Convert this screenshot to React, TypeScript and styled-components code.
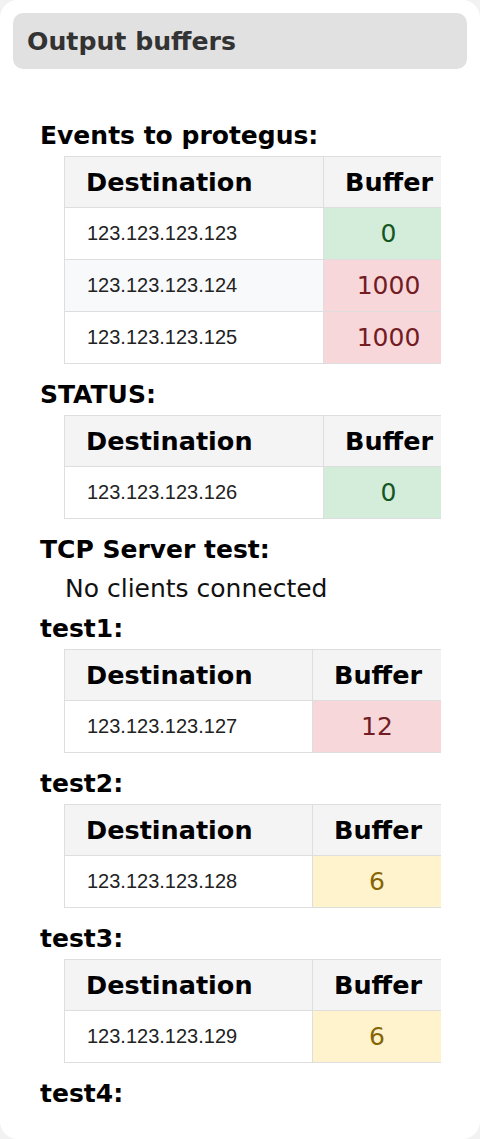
import React from "react";
import styled, { createGlobalStyle } from "styled-components";

const GlobalStyle = createGlobalStyle`
  html, body { margin: 0; padding: 0; background: #f2f2f2; }
  body { font-family: "DejaVu Sans", Verdana, sans-serif; }
`;

const Card = styled.div`
  width: 480px;
  height: 1139px;
  background: #fff;
  border-radius: 18px;
  overflow: hidden;
  box-sizing: border-box;
  padding-top: 13px;
`;

const TitleBar = styled.header`
  margin: 0 13px;
  height: 56px;
  background: #e1e1e1;
  border-radius: 10px;
  display: flex;
  align-items: center;
  padding: 0 14px;
  box-sizing: border-box;
`;

const Title = styled.h2`
  margin: 0;
  font-size: 25.2px;
  font-weight: bold;
  color: #333;
`;

const Content = styled.div`
  padding: 52px 39px 0 40px;
`;

const Heading = styled.h3`
  margin: 0;
  font-size: 25px;
  line-height: 30px;
  font-weight: bold;
  color: #000;
`;

const Note = styled.p`
  margin: 2px 0 3px 25px;
  font-size: 25px;
  line-height: 44px;
  color: #111;
`;

const TableWrap = styled.div`
  margin: 5px 0 16px 24px;
  overflow: hidden;
`;

const Table = styled.table`
  border-collapse: collapse;
  table-layout: fixed;
`;

const Th = styled.th`
  height: 51px;
  padding: 0 21px;
  box-sizing: border-box;
  text-align: left;
  background: #f4f4f4;
  border: 1px solid #dedede;
  font-size: 25.5px;
  font-weight: bold;
  color: #000;
  white-space: nowrap;
`;

const Td = styled.td`
  height: 52px;
  padding: 0 22px;
  box-sizing: border-box;
  border: 1px solid #dedede;
  font-family: "Liberation Sans", Arial, sans-serif;
  font-size: 20px;
  color: #222;
  white-space: nowrap;
`;

type Level = "ok" | "warn" | "bad";

const palette: Record<Level, { bg: string; fg: string }> = {
  ok: { bg: "#d4edda", fg: "#155724" },
  warn: { bg: "#fff3cd", fg: "#856404" },
  bad: { bg: "#f8d7da", fg: "#721c24" },
};

const ValueTd = styled.td<{ $level: Level }>`
  height: 52px;
  padding: 0 10px;
  box-sizing: border-box;
  border: 1px solid #dedede;
  text-align: center;
  font-size: 25px;
  background: ${(p) => palette[p.$level].bg};
  color: ${(p) => palette[p.$level].fg};
`;

const Tr = styled.tr<{ $striped?: boolean }>`
  background: ${(p) => (p.$striped ? "#f8f9fb" : "#fff")};
`;

type Row = { ip: string; value: number };

const levelOf = (v: number): Level => (v === 0 ? "ok" : v < 10 ? "warn" : "bad");

const BufferTable: React.FC<{ rows: Row[]; dest: number; buf: number }> = ({ rows, dest, buf }) => (
  <TableWrap>
    <Table style={{ width: dest + buf }}>
      <colgroup>
        <col style={{ width: dest }} />
        <col style={{ width: buf }} />
      </colgroup>
      <thead>
        <tr>
          <Th>Destination</Th>
          <Th>Buffer</Th>
        </tr>
      </thead>
      <tbody>
        {rows.map((r, i) => (
          <Tr key={r.ip} $striped={i % 2 === 1}>
            <Td>{r.ip}</Td>
            <ValueTd $level={levelOf(r.value)}>{r.value}</ValueTd>
          </Tr>
        ))}
      </tbody>
    </Table>
  </TableWrap>
);

export default function App() {
  return (
    <>
      <GlobalStyle />
      <Card>
        <TitleBar>
          <Title>Output buffers</Title>
        </TitleBar>
        <Content>
          <Heading>Events to protegus:</Heading>
          <BufferTable
            dest={259}
            buf={130}
            rows={[
              { ip: "123.123.123.123", value: 0 },
              { ip: "123.123.123.124", value: 1000 },
              { ip: "123.123.123.125", value: 1000 },
            ]}
          />
          <Heading>STATUS:</Heading>
          <BufferTable dest={259} buf={130} rows={[{ ip: "123.123.123.126", value: 0 }]} />
          <Heading>TCP Server test:</Heading>
          <Note>No clients connected</Note>
          <Heading>test1:</Heading>
          <BufferTable dest={248} buf={129} rows={[{ ip: "123.123.123.127", value: 12 }]} />
          <Heading>test2:</Heading>
          <BufferTable dest={248} buf={129} rows={[{ ip: "123.123.123.128", value: 6 }]} />
          <Heading>test3:</Heading>
          <BufferTable dest={248} buf={129} rows={[{ ip: "123.123.123.129", value: 6 }]} />
          <Heading>test4:</Heading>
        </Content>
      </Card>
    </>
  );
}
